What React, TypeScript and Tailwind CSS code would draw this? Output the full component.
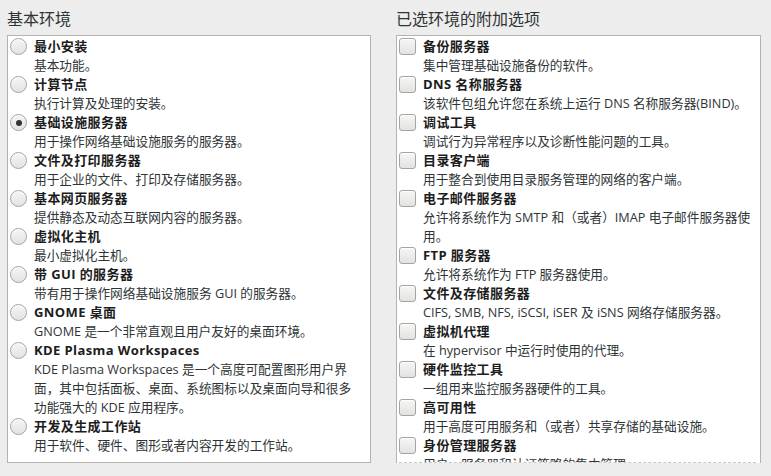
const FONT = { fontFamily: '"Open Sans", "Noto Sans CJK SC", sans-serif' };

type Option = { title: string; desc: string };

const environments: Option[] = [
  { title: "最小安装", desc: "基本功能。" },
  { title: "计算节点", desc: "执行计算及处理的安装。" },
  { title: "基础设施服务器", desc: "用于操作网络基础设施服务的服务器。" },
  { title: "文件及打印服务器", desc: "用于企业的文件、打印及存储服务器。" },
  { title: "基本网页服务器", desc: "提供静态及动态互联网内容的服务器。" },
  { title: "虚拟化主机", desc: "最小虚拟化主机。" },
  { title: "带 GUI 的服务器", desc: "带有用于操作网络基础设施服务 GUI 的服务器。" },
  { title: "GNOME 桌面", desc: "GNOME 是一个非常直观且用户友好的桌面环境。" },
  {
    title: "KDE Plasma Workspaces",
    desc: "KDE Plasma Workspaces 是一个高度可配置图形用户界面，其中包括面板、桌面、系统图标以及桌面向导和很多功能强大的 KDE 应用程序。",
  },
  { title: "开发及生成工作站", desc: "用于软件、硬件、图形或者内容开发的工作站。" },
];

const addons: Option[] = [
  { title: "备份服务器", desc: "集中管理基础设施备份的软件。" },
  { title: "DNS 名称服务器", desc: "该软件包组允许您在系统上运行 DNS 名称服务器(BIND)。" },
  { title: "调试工具", desc: "调试行为异常程序以及诊断性能问题的工具。" },
  { title: "目录客户端", desc: "用于整合到使用目录服务管理的网络的客户端。" },
  { title: "电子邮件服务器", desc: "允许将系统作为 SMTP 和（或者）IMAP 电子邮件服务器使用。" },
  { title: "FTP 服务器", desc: "允许将系统作为 FTP 服务器使用。" },
  { title: "文件及存储服务器", desc: "CIFS, SMB, NFS, iSCSI, iSER 及 iSNS 网络存储服务器。" },
  { title: "虚拟机代理", desc: "在 hypervisor 中运行时使用的代理。" },
  { title: "硬件监控工具", desc: "一组用来监控服务器硬件的工具。" },
  { title: "高可用性", desc: "用于高度可用服务和（或者）共享存储的基础设施。" },
  { title: "身份管理服务器", desc: "用户、服务器和认证策略的集中管理。" },
];

function Radio({ checked }: { checked: boolean }) {
  return (
    <span className="mt-[1px] flex h-[17px] w-[17px] shrink-0 items-center justify-center rounded-full border border-[#a4a4a2] bg-gradient-to-b from-[#f6f6f5] to-[#e2e2e0] shadow-[inset_0_1px_0_#fff]">
      {checked && <span className="h-[6px] w-[6px] rounded-full bg-[#2e3436]" />}
    </span>
  );
}

function Checkbox() {
  return (
    <span className="mt-[1px] h-[17px] w-[17px] shrink-0 rounded-[3px] border border-[#a4a4a2] bg-gradient-to-b from-[#f6f6f5] to-[#e2e2e0] shadow-[inset_0_1px_0_#fff]" />
  );
}

function Row({ option, control }: { option: Option; control: React.ReactNode }) {
  return (
    <div className="flex gap-[7px]">
      {control}
      <div className="min-w-0 flex-1">
        <div className="text-[13px] leading-[19px] font-bold tracking-[0.4px] text-[#1c1c1c]">{option.title}</div>
        <div className="text-[12.7px] leading-[19px] text-[#2e3436]">{option.desc}</div>
      </div>
    </div>
  );
}

export default function App() {
  return (
    <div style={FONT} className="flex h-[476px] w-[771px] gap-[25px] overflow-hidden bg-[#ededed] px-[7px] pt-[8px]">
      <section className="flex w-[364px] flex-col">
        <h2 className="h-[27px] text-[16px] leading-[22px] text-[#2e3436]">基本环境</h2>
        <div className="flex h-[428px] flex-col border border-[#b3b3b1] bg-white pt-[1px] pr-[10px] pl-[2px]">
          {environments.map((o, i) => (
            <Row key={o.title} option={o} control={<Radio checked={i === 2} />} />
          ))}
        </div>
      </section>
      <section className="flex w-[365px] flex-col">
        <h2 className="h-[27px] text-[16px] leading-[22px] text-[#2e3436]">已选环境的附加选项</h2>
        <div className="flex h-[428px] flex-col overflow-hidden border border-b-0 border-[#b3b3b1] bg-white pt-[1px] pr-[4px] pl-[2px]">
          <div className="flex-1 overflow-hidden">
            {addons.map((o) => (
              <Row key={o.title} option={o} control={<Checkbox />} />
            ))}
          </div>
          <div className="h-0 border-b border-dashed border-[#c8c8c6]" />
        </div>
      </section>
    </div>
  );
}
